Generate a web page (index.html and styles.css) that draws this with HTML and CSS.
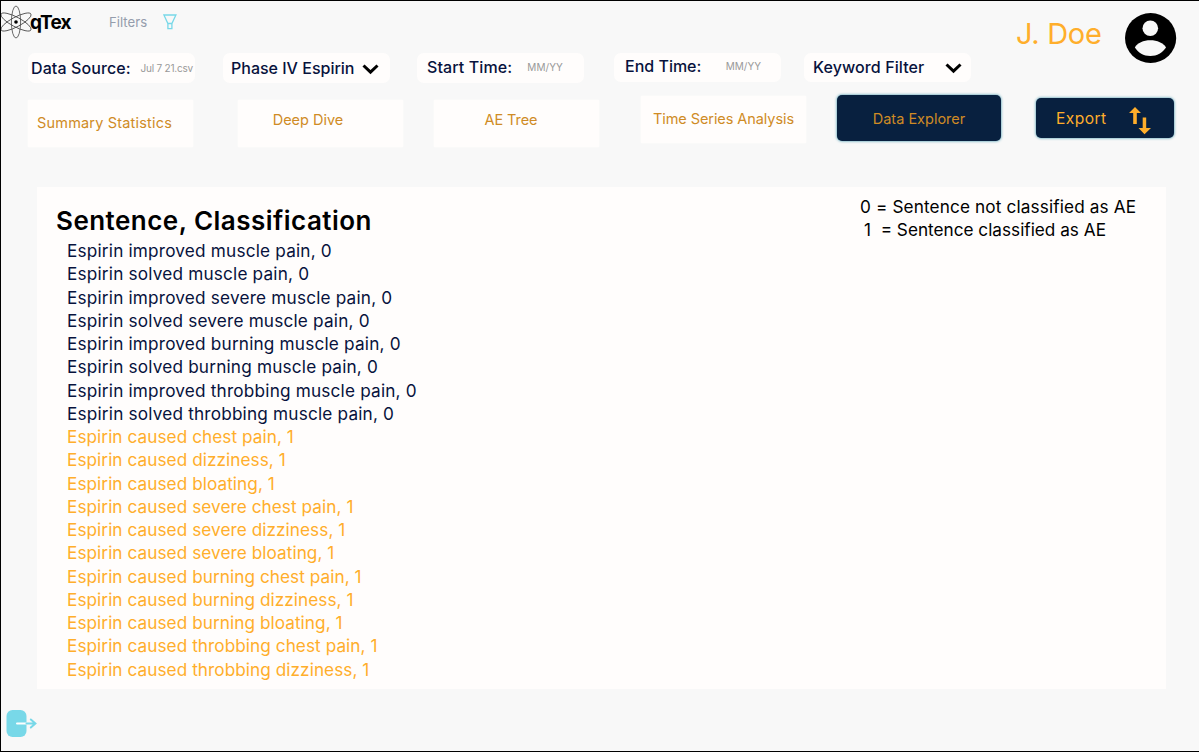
FILE: index.html
```html
<!DOCTYPE html>
<html lang="en">
<head>
<meta charset="utf-8">
<title>qTex Data Explorer</title>
<link rel="stylesheet" href="styles.css">
</head>
<body>
<div class="page">
  <header class="top">
    <div class="top-main">
      <div class="brand-row">
        <svg class="atom" width="32" height="34" viewBox="0 0 32 34" fill="none" stroke="#444" stroke-width="0.8">
          <ellipse cx="15" cy="17" rx="4.6" ry="16"/>
          <ellipse cx="15" cy="17" rx="4.8" ry="17" transform="rotate(62 15 17)"/>
          <ellipse cx="15" cy="17" rx="4.8" ry="17" transform="rotate(-62 15 17)"/>
          <circle cx="15" cy="17" r="1.8" fill="#000" stroke="none"/>
        </svg>
        <span class="brand">qTex</span>
        <span class="filters-label">Filters</span>
        <svg class="funnel" width="14" height="16" viewBox="0 0 14 16" fill="none" stroke="#78d8e8" stroke-width="1.3">
          <path d="M0.9 1H12.9L8.9 9.5H4.9ZM4.9 9.5V14.7H8.9V9.5"/>
        </svg>
      </div>
      <div class="filter-row">
        <div class="chip source"><span class="chip-label">Data Source:</span><span class="chip-value">Jul 7 21.csv</span></div>
        <div class="chip phase"><span class="chip-label">Phase IV Espirin</span>
          <svg width="17" height="11" viewBox="0 0 17 11" fill="none" stroke="#000" stroke-width="3"><path d="M1.5 1.5L8.5 8.2L15.5 1.5"/></svg></div>
        <div class="chip start"><span class="chip-label">Start Time:</span><span class="chip-value">MM/YY</span></div>
        <div class="chip end"><span class="chip-label">End Time:</span><span class="chip-value">MM/YY</span></div>
        <div class="chip keyword"><span class="chip-label">Keyword Filter</span>
          <svg width="17" height="11" viewBox="0 0 17 11" fill="none" stroke="#000" stroke-width="3"><path d="M1.5 1.5L8.5 8.2L15.5 1.5"/></svg></div>
      </div>
    </div>
    <div class="account">
      <span class="user">J. Doe</span>
      <svg class="avatar" width="52" height="50" viewBox="0 0 52 50">
        <ellipse cx="25.6" cy="25" rx="25.6" ry="25"/>
        <circle cx="25.3" cy="15.2" r="7.8" fill="#f8f8f8"/>
        <path d="M9.9 34.5C12.1 30 18.6 27.3 25.3 27.3S38.6 30 41 34.5C37.6 39.5 32.1 43 25.3 43S13.1 39.5 9.9 34.5Z" fill="#f8f8f8"/>
      </svg>
    </div>
  </header>
  <nav class="tabs">
    <div class="tab summary"><span>Summary Statistics</span></div>
    <div class="tab deep"><span>Deep Dive</span></div>
    <div class="tab tree"><span>AE Tree</span></div>
    <div class="tab series"><span>Time Series Analysis</span></div>
    <div class="tab explorer"><span>Data Explorer</span></div>
    <div class="tab export"><span>Export</span>
      <svg width="22" height="28" viewBox="0 0 22 28" fill="#ffae2b"><path d="M6 0L12 6H7.8V17H4.2V6H0ZM13.7 10.5H17.2V21H22L15.5 27.3L9.5 21H13.7Z"/></svg></div>
  </nav>
  <main class="panel">
    <section class="results">
      <h1>Sentence, Classification</h1>
      <ul class="none">
        <li>Espirin improved muscle pain, 0</li>
        <li>Espirin solved muscle pain, 0</li>
        <li>Espirin improved severe muscle pain, 0</li>
        <li>Espirin solved severe muscle pain, 0</li>
        <li>Espirin improved burning muscle pain, 0</li>
        <li>Espirin solved burning muscle pain, 0</li>
        <li>Espirin improved throbbing muscle pain, 0</li>
        <li>Espirin solved throbbing muscle pain, 0</li>
      </ul>
      <ul class="adverse">
        <li>Espirin caused chest pain, 1</li>
        <li>Espirin caused dizziness, 1</li>
        <li>Espirin caused bloating, 1</li>
        <li>Espirin caused severe chest pain, 1</li>
        <li>Espirin caused severe dizziness, 1</li>
        <li>Espirin caused severe bloating, 1</li>
        <li>Espirin caused burning chest pain, 1</li>
        <li>Espirin caused burning dizziness, 1</li>
        <li>Espirin caused burning bloating, 1</li>
        <li>Espirin caused throbbing chest pain, 1</li>
        <li>Espirin caused throbbing dizziness, 1</li>
      </ul>
    </section>
    <aside class="legend">
      <p>0 = Sentence not classified as AE</p>
      <p class="one">1&nbsp; = Sentence classified as AE</p>
    </aside>
  </main>
  <footer class="foot">
    <svg width="31" height="28" viewBox="0 0 31 28" fill="none">
      <rect x="0.5" y="0" width="20" height="27" rx="6" fill="#78d8e8"/>
      <path d="M11 13.5H20.5" stroke="#fff" stroke-width="2" stroke-linecap="round"/>
      <path d="M20.5 13.5H29M24.8 9.5L29.4 13.5L24.8 17.5" stroke="#78d8e8" stroke-width="2" stroke-linecap="round"/>
    </svg>
  </footer>
</div>
</body>
</html>
```
FILE: styles.css
```css
* { box-sizing: border-box; }
body { margin: 0; font-family: Inter, "Liberation Sans", sans-serif; }
.page { width: 1199px; height: 752px; overflow: hidden; background: #f8f8f8; border: solid #000; border-width: 1px 0 1px 1px; display: flex; flex-direction: column; white-space: nowrap; }
svg { display: block; flex: none; }
.top { display: flex; height: 83px; }
.top-main { width: 1015px; }
.brand-row { display: flex; align-items: center; height: 52px; padding-bottom: 10px; }
.brand { font-size: 19px; font-weight: 700; letter-spacing: -0.9px; margin-left: -3px; width: 79px; }
.filters-label { font-size: 13.2px; color: #959dac; width: 54px; }
.filter-row { display: flex; align-items: flex-start; padding-left: 27px; }
.chip { height: 30px; width: 167px; border-radius: 7px; background: #fffdfc; display: flex; align-items: center; justify-content: space-between; }
.chip-label { font-size: 16px; font-weight: 500; color: #07123c; }
.chip-value { font-size: 10px; color: #999; }
.source { padding: 0 2px 1px 3px; }
.source .chip-label { letter-spacing: 0.1px; }
.source .chip-value { letter-spacing: -0.2px; }
.phase { margin-left: 28px; padding: 0 11px 0 8px; }
.phase svg, .keyword svg { margin-top: 2px; }
.start { margin-left: 27px; padding: 0 21px 2px 10px; letter-spacing: 0.1px; }
.end { margin-left: 30px; height: 29px; padding: 0 20px 3px 11px; }
.keyword { margin-left: 23px; height: 29px; padding: 0 9px 1px 9px; }
.keyword .chip-label { letter-spacing: 0.1px; }
.account { display: flex; align-items: flex-start; }
.user { font-size: 29px; letter-spacing: -0.3px; color: #ffae2b; line-height: 36px; margin-top: 15px; width: 109px; }
.avatar { margin-top: 12px; }
.tabs { display: flex; align-items: flex-start; height: 103px; padding: 10px 0 0 27px; }
.tab { width: 165px; height: 47px; background: #fffdfc; color: #cf8b25; font-size: 14.5px; display: flex; align-items: center; justify-content: center; box-shadow: 0 0 2px #fffdfc; }
.summary { margin-top: 6px; padding-right: 12px; padding-bottom: 3px; letter-spacing: 0.18px; }
.deep { margin: 6px 0 0 45px; padding: 0 25px 8px 0; }
.tree { margin: 6px 0 0 31px; padding: 0 11px 8px 0; letter-spacing: -0.1px; }
.series { margin: 2px 0 0 42px; padding-bottom: 2px; letter-spacing: -0.07px; }
.explorer { margin: 1px 0 0 31px; height: 46px; width: 164px; background: #08203f; border-radius: 5px; box-shadow: 0 0 3px #2b8ba5; }
.export { margin: 4px 0 0 35px; width: 138px; height: 40px; background: #08203f; border-radius: 5px; color: #ffae2b; box-shadow: 0 0 3px #2b8ba5; justify-content: space-between; padding: 0 23px 0 20px; font-size: 15.6px; letter-spacing: 0.4px; }
.export svg { margin-top: 5px; }
.panel { margin-left: 36px; width: 1129px; height: 502px; background: #fffdfc; display: flex; justify-content: space-between; }
.results { padding: 17px 0 0 19px; }
h1 { margin: 0 0 1px; font-size: 26px; line-height: 34px; font-weight: 600; letter-spacing: 0.47px; }
ul { list-style: none; margin: 0; padding: 0 0 0 11px; font-size: 17.2px; line-height: 23.25px; }
.none { color: #07123c; letter-spacing: 0.19px; }
.adverse { color: #ffae2b; letter-spacing: 0.06px; }
.legend { width: 306px; padding-top: 8px; font-size: 17.2px; line-height: 23.25px; letter-spacing: 0.13px; }
.legend p { margin: 0; }
.legend .one { padding-left: 4px; letter-spacing: 0; }
.foot { padding: 21px 0 0 5px; }
```
